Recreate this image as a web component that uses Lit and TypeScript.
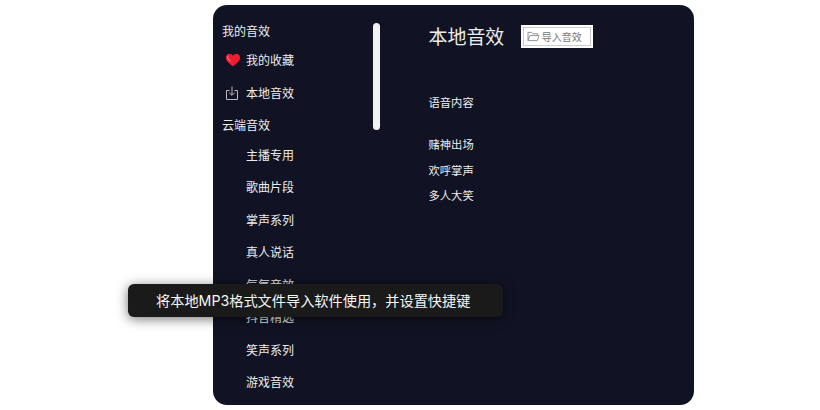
import { LitElement, html, css, svg } from "lit";
import { customElement } from "lit/decorators.js";

const cloud = ["主播专用", "歌曲片段", "掌声系列", "真人说话", "气氛音效", "抖音精选", "笑声系列", "游戏音效"];
const sounds = ["赌神出场", "欢呼掌声", "多人大笑"];
const tipText = "将本地MP3格式文件导入软件使用\uFF0C并设置快捷键";

const heart = svg`<svg class="ico" viewBox="0 0 16 16" width="16" height="16">
  <path d="M9 14.2C4.6 11 1.9 8.6 1.9 5.4 1.9 3.2 3.6 1.7 5.5 1.7c1.5 0 2.7.8 3.5 2 .8-1.2 2-2 3.5-2 1.9 0 3.6 1.5 3.6 3.7 0 3.2-2.7 5.6-7.1 8.8z" fill="#ee1c2e"/>
  <path d="M4 4.2c-.6.7-.6 1.6 0 2.4l2.2 2.2" fill="none" stroke="#ff7a80" stroke-width="1.1" stroke-linecap="round"/>
</svg>`;
const importIco = svg`<svg class="ico" viewBox="0 0 16 16" width="16" height="16" fill="none" stroke="#b9bac2" stroke-width="1">
  <path d="M5.5 5.5H2.5v9h11v-9h-3"/>
  <path d="M8 1.5v8.5M5.2 7.6 8 10.4l2.8-2.8"/>
</svg>`;
const folder = svg`<svg viewBox="0 0 14 12" width="13" height="11" fill="none" stroke="#8a8a8a" stroke-width="1">
  <path d="M1 10.5v-9h4l1.2 1.5h5.3v2"/>
  <path d="M1 10.5 3 5h10l-2 5.5z"/>
</svg>`;

@customElement("app-root")
export class AppRoot extends LitElement {
  static styles = css`
    :host {
      display: block;
      width: 820px;
      height: 410px;
      background: #fff;
      font-family: "Noto Sans CJK SC", "Noto Sans", sans-serif;
      overflow: hidden;
    }
    .stage {
      position: relative;
      padding: 5px 0 5px 213px;
      box-sizing: border-box;
      height: 410px;
    }
    .panel {
      position: relative;
      width: 481px;
      height: 400px;
      border-radius: 14px;
      background: #111324;
      color: #eceded;
      display: flex;
      overflow: hidden;
    }
    .side {
      width: 215.5px;
      flex: none;
      padding-top: 10px;
      box-sizing: border-box;
      font-size: 12px;
    }
    .group {
      height: 26px;
      line-height: 26px;
      margin-top: 3px;
      padding-left: 9px;
    }
    .cloud {
      margin-top: 0.6px;
    }
    .row {
      height: 32.5px;
      line-height: 32.5px;
      padding-left: 33px;
      position: relative;
    }
    .ico {
      position: absolute;
      left: 11px;
      top: 8px;
    }
    .thumb {
      position: absolute;
      left: 160px;
      top: 18px;
      width: 7px;
      height: 107px;
      border-radius: 4px;
      background: #f1f1f1;
    }
    .main {
      flex: 1;
    }
    .head {
      display: flex;
      align-items: center;
      gap: 16.5px;
      height: 24px;
      margin-top: 19px;
    }
    h1 {
      margin: 0;
      font-size: 19px;
      font-weight: 400;
      line-height: 24px;
      letter-spacing: -0.05px;
    }
    .btn {
      width: 72px;
      height: 23px;
      box-sizing: border-box;
      background: #fff;
      border: 2px solid #fff;
      outline: none;
      padding: 0;
      font: inherit;
    }
    .btn span {
      display: flex;
      align-items: center;
      gap: 2px;
      height: 100%;
      box-sizing: border-box;
      border: 1px solid #c9c9c9;
      padding-left: 3px;
      font-size: 10px;
      color: #777;
      white-space: nowrap;
    }
    .label {
      margin-top: 46px;
      font-size: 11.3px;
      line-height: 16px;
    }
    .list {
      margin-top: 26px;
      font-size: 11.3px;
      line-height: 16px;
      display: flex;
      flex-direction: column;
      gap: 9.5px;
    }
    .tip {
      position: absolute;
      left: 128px;
      top: 284px;
      width: 375px;
      height: 33px;
      box-sizing: border-box;
      padding-left: 28px;
      border-radius: 6px;
      background: #1a1a1a;
      color: #f6f6f6;
      font-family: Inter, "Noto Sans CJK SC", sans-serif;
      font-size: 14.2px;
      line-height: 33px;
      white-space: nowrap;
      box-shadow: 0 2px 12px rgba(0, 0, 0, 0.55);
    }
  `;

  render() {
    return html`
      <div class="stage">
        <div class="panel">
          <div class="side">
            <div class="group">我的音效</div>
            <div class="row">${heart}我的收藏</div>
            <div class="row">${importIco}本地音效</div>
            <div class="group">云端音效</div>
            <div class="cloud">
              ${cloud.map((c) => html`<div class="row">${c}</div>`)}
            </div>
          </div>
          <div class="thumb"></div>
          <div class="main">
            <div class="head">
              <h1>本地音效</h1>
              <button class="btn"><span>${folder}导入音效</span></button>
            </div>
            <div class="label">语音内容</div>
            <div class="list">
              ${sounds.map((s) => html`<div>${s}</div>`)}
            </div>
          </div>
        </div>
        <div class="tip">${tipText}</div>
      </div>
    `;
  }
}
